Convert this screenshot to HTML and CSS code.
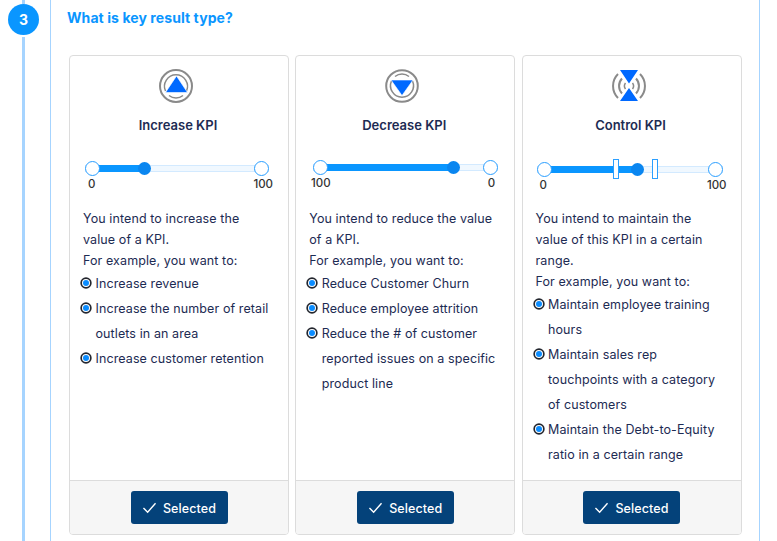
FILE: index.html
```html
<!DOCTYPE html>
<html lang="en">
<head>
<meta charset="utf-8">
<title>Key result type</title>
<link rel="stylesheet" href="styles.css">
</head>
<body>
<div class="page">
  <div class="rail">
    <div class="rail-stub"></div>
    <div class="step">3</div>
    <div class="rail-line"></div>
  </div>
  <main class="panel">
    <h2 class="question">What is key result type?</h2>
    <div class="cards">
      <section class="card card-inc">
        <div class="card-body">
          <svg class="kpi-icon" viewBox="0 0 34 34" width="34" height="34">
            <circle cx="17" cy="17" r="16" fill="none" stroke="#8a8a8a" stroke-width="2"/>
            <path d="M6.500 22 A11.500 11.500 0 1 1 27.500 22 M10 26.500 A11.500 11.500 0 0 0 24 26.500" fill="none" stroke="#8a8a8a" stroke-width="1.500"/>
            <path d="M17.500 7 L28.500 23.500 H6.500 Z" fill="#0069ff" stroke="#fff" stroke-width="0.600"/>
          </svg>
          <h3 class="card-title">Increase KPI</h3>
          <div class="gauge">
            <div class="slider">
              <div class="track"></div>
              <div class="fill"></div>
              <div class="knob knob-start"></div>
              <div class="thumb"></div>
              <div class="knob knob-end"></div>
            </div>
            <div class="scale"><span>0</span><span>100</span></div>
          </div>
          <p class="desc">You intend to increase the value of a KPI.</p>
          <p class="desc">For example, you want to:</p>
          <ul class="examples">
            <li>Increase revenue</li>
            <li>Increase the number of retail outlets in an area</li>
            <li>Increase customer retention</li>
          </ul>
        </div>
        <div class="card-foot"><button class="selected-btn"><svg viewBox="0 0 16 14" width="15" height="13"><path d="M1.500 7.500 L6 12 L14.500 2.500" fill="none" stroke="#fff" stroke-width="1.500"/></svg><span class="btn-label">Selected</span></button></div>
      </section>
      <section class="card card-dec">
        <div class="card-body">
          <svg class="kpi-icon" viewBox="0 0 34 34" width="34" height="34">
            <circle cx="17" cy="17" r="15.800" fill="none" stroke="#8a8a8a" stroke-width="2"/>
            <path d="M6.500 12 A11.500 11.500 0 1 0 27.500 12 M10 7.500 A11.500 11.500 0 0 1 24 7.500" fill="none" stroke="#8a8a8a" stroke-width="1.500"/>
            <path d="M17 26.500 L28 11 H6 Z" fill="#0069ff" stroke="#fff" stroke-width="0.600"/>
          </svg>
          <h3 class="card-title">Decrease KPI</h3>
          <div class="gauge">
            <div class="slider">
              <div class="track"></div>
              <div class="fill"></div>
              <div class="knob knob-start"></div>
              <div class="thumb"></div>
              <div class="knob knob-end"></div>
            </div>
            <div class="scale"><span>100</span><span>0</span></div>
          </div>
          <p class="desc">You intend to reduce the value of a KPI.</p>
          <p class="desc">For example, you want to:</p>
          <ul class="examples">
            <li>Reduce Customer Churn</li>
            <li>Reduce employee attrition</li>
            <li>Reduce the # of customer reported issues on a specific product line</li>
          </ul>
        </div>
        <div class="card-foot"><button class="selected-btn"><svg viewBox="0 0 16 14" width="15" height="13"><path d="M1.500 7.500 L6 12 L14.500 2.500" fill="none" stroke="#fff" stroke-width="1.500"/></svg><span class="btn-label">Selected</span></button></div>
      </section>
      <section class="card card-ctl">
        <div class="card-body">
          <svg class="kpi-icon" viewBox="0 0 34 34" width="34" height="34">
            <path d="M6 5 A17 17 0 0 0 6 29 M28 5 A17 17 0 0 1 28 29" fill="none" stroke="#8a8a8a" stroke-width="2"/>
            <path d="M10 9.500 A11 11 0 0 0 10 24.500 M24 9.500 A11 11 0 0 1 24 24.500" fill="none" stroke="#8a8a8a" stroke-width="2"/>
            <path d="M13.500 14 A5 5 0 0 0 13.500 20 M20.500 14 A5 5 0 0 1 20.500 20" fill="none" stroke="#8a8a8a" stroke-width="1.500"/>
            <path d="M8 1 H26 L17 14.500 Z M17 19 L26 32 H8 Z" fill="#0069ff"/>
          </svg>
          <h3 class="card-title">Control KPI</h3>
          <div class="gauge">
            <div class="slider">
              <div class="track"></div>
              <div class="fill"></div>
              <div class="knob knob-start"></div>
              <div class="tick tick-a"></div>
              <div class="thumb"></div>
              <div class="tick tick-b"></div>
              <div class="knob knob-end"></div>
            </div>
            <div class="scale"><span>0</span><span>100</span></div>
          </div>
          <p class="desc">You intend to maintain the value of this KPI in a certain range.</p>
          <p class="desc">For example, you want to:</p>
          <ul class="examples">
            <li>Maintain employee training hours</li>
            <li>Maintain sales rep touchpoints with a category of customers</li>
            <li>Maintain the Debt-to-Equity ratio in a certain range</li>
          </ul>
        </div>
        <div class="card-foot"><button class="selected-btn"><svg viewBox="0 0 16 14" width="15" height="13"><path d="M1.500 7.500 L6 12 L14.500 2.500" fill="none" stroke="#fff" stroke-width="1.500"/></svg><span class="btn-label">Selected</span></button></div>
      </section>
    </div>
  </main>
</div>
</body>
</html>
```
FILE: styles.css
```css
* { box-sizing: border-box; }
html, body { margin: 0; height: 100%; background: #fff; overflow: hidden; }
body { font-family: Inter, "Liberation Sans", sans-serif; color: #1d2b53; }
.page { display: flex; height: 541px; width: 760px; }
.rail { width: 50px; display: flex; flex-direction: column; align-items: flex-start; padding-left: 8px; }
.rail-stub { width: 3px; height: 4px; margin-left: 14px; background: #a6d4ff; flex: none; }
.step { width: 31px; height: 31px; flex: none; border-radius: 50%; background: #0a96ff; color: #fff; font-size: 14px; font-weight: 700; display: flex; align-items: center; justify-content: center; }
.rail-line { width: 3px; flex: 1; margin: 2px 0 0 14px; background: #a6d4ff; }
.panel { flex: 1; border-left: 1px solid #a6d4ff; border-right: 1px solid #a6d4ff; padding: 0 17px 0 18px; min-width: 0; }
.question { margin: 9px 0 0 -2px; font-size: 14px; line-height: 17px; font-weight: 700; letter-spacing: 0.08px; color: #0a96ff; }
.cards { display: flex; gap: 6.250px; margin-top: 29px; height: 480px; }
.card { width: 220px; flex: none; display: flex; flex-direction: column; border: 1px solid #dcdcdc; border-radius: 4px; overflow: hidden; background: #fff; }
.card-body { flex: 1; padding: 13px 13px 0; display: flex; flex-direction: column; }
.kpi-icon { display: block; align-self: center; margin-right: 6px; flex: none; }
.card-title { margin: 14px 0 0; padding-right: 2px; font-size: 13px; line-height: 16px; font-weight: 600; text-align: center; color: #1d2b53; }

.gauge { height: 48px; margin-top: 27px; flex: none; }
.slider { position: relative; height: 16px; }
.card-inc .slider { margin: 1px 6px 0 2px; }
.card-dec .slider { margin: 0 3px 0 3.750px; }
.card-ctl .slider { margin: 2px 5px 0 1px; }
.track { position: absolute; left: 0; right: 0; top: 4px; height: 7px; background: #f0f8ff; border: 1px solid #d3eaff; border-width: 1px 0; }
.fill { position: absolute; left: 4px; top: 4px; height: 7px; background: #0a96ff; }
.card-inc .fill { width: 50px; }
.card-dec .fill { width: 132px; }
.card-ctl .fill { width: 92px; }
.knob { position: absolute; top: 0; width: 15px; height: 15px; border-radius: 50%; background: #fff; border: 1.500px solid #2b9fff; }
.knob-start { left: 0; }
.knob-end { right: 0; }
.thumb { position: absolute; top: 1px; width: 13px; height: 13px; border-radius: 50%; background: #0a86f0; }
.card-inc .thumb { left: 53px; }
.card-dec .thumb { left: 134px; }
.card-ctl .thumb { left: 94px; }
.tick { position: absolute; top: -3px; width: 6px; height: 20px; background: #fff; border: 1.500px solid #2b9fff; }
.tick-a { left: 76px; }
.tick-b { left: 115px; }
.scale { display: flex; justify-content: space-between; font-size: 11.500px; line-height: 15px; color: #333; font-weight: 500; }
.card-inc .scale { margin: 0 2px 0 5px; }
.card-dec .scale { margin: 0 6px 0 1.750px; }
.card-ctl .scale { margin: 0 1px 0 4px; }

.desc { margin: 0; max-width: 188px; font-size: 12.500px; line-height: 21px; letter-spacing: 0.1px; color: #1d2b53; }
.examples { list-style: none; margin: 0; padding: 0; font-size: 12.500px; line-height: 25px; letter-spacing: 0.1px; }
.examples li { position: relative; padding-left: 12.500px; }
.examples li::before { content: ""; position: absolute; left: 0; top: 9px; width: 6px; height: 6px; border-radius: 50%; background: #0a8cff; box-shadow: 0 0 0 1px #fff, 0 0 0 2.700px #23262e; }
.card-foot { height: 54px; flex: none; display: flex; align-items: center; justify-content: center; background: #f6f6f6; border-top: 1px solid #dcdcdc; }
.selected-btn { height: 33px; width: 97px; display: flex; align-items: center; justify-content: center; gap: 6px; border: 0; border-radius: 3px; background: #04427a; color: #fff; font-family: inherit; font-size: 12.500px; font-weight: 500; letter-spacing: 0.1px; }
.btn-label { padding-top: 1px; }
```
